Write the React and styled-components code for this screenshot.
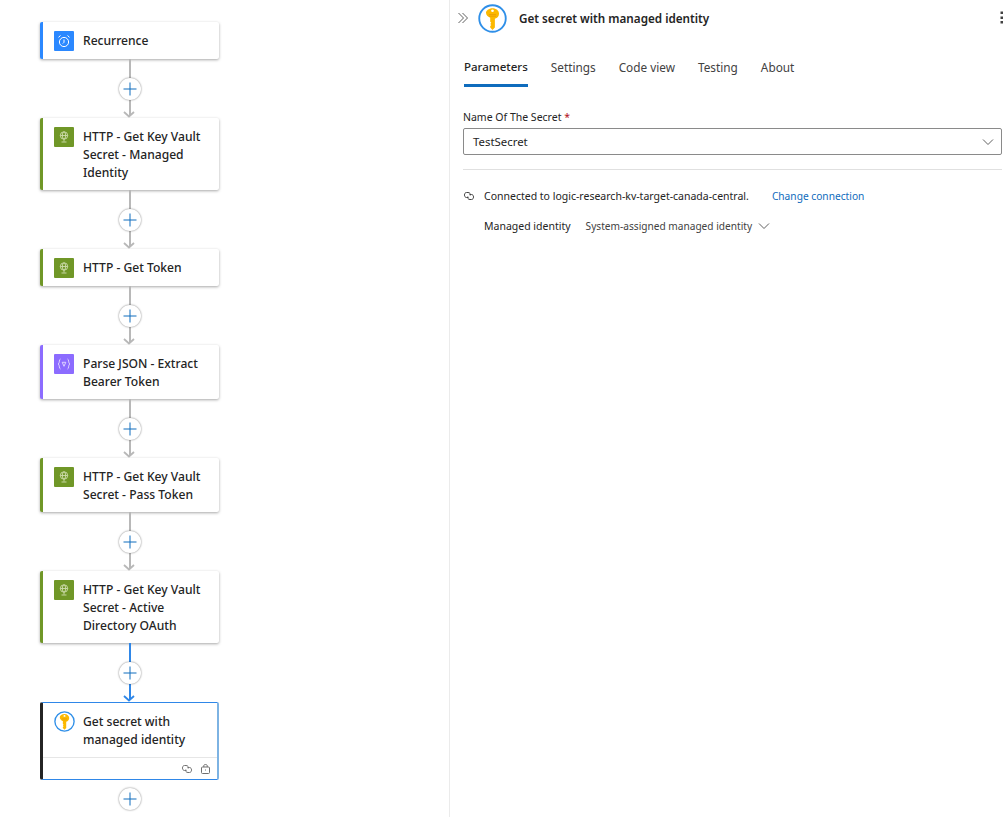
import React from 'react';
import styled, { createGlobalStyle } from 'styled-components';

const GlobalStyle = createGlobalStyle`
    html, body {
        margin: 0;
        padding: 0;
        background: #fff;
        overflow: hidden;
    }
    body {
        font-family: "Noto Sans", "Open Sans", sans-serif;
        color: #242424;
    }
`;

const Page = styled.div`
    display: flex;
    width: 1006px;
    height: 817px;
    overflow: hidden;
`;

const Canvas = styled.div`
    width: 450px;
    flex-shrink: 0;
    box-sizing: border-box;
    padding: 22px 0 0 40px;
    border-right: 1px solid #ebebeb;
    display: flex;
    flex-direction: column;
    align-items: flex-start;
`;

const Card = styled.div`
    width: 179px;
    box-sizing: border-box;
    min-height: 37px;
    background: #fff;
    border-left: 3px solid ${({ $color }) => $color};
    border-radius: 2px;
    box-shadow: 0 1px 3px rgba(0, 0, 0, 0.35);
`;

const SelectedCard = styled(Card)`
    border-top: 1px solid #2f87e8;
    border-bottom: 1px solid #2f87e8;
    border-right: 2px solid #7db3e3;
    box-shadow: none;
`;

const CardBody = styled.div`
    display: flex;
    gap: ${({ $selected }) => ($selected ? '8px' : '9px')};
    padding: 8px 6px 8px 11px;
`;

const IconTile = styled.div`
    width: 20px;
    height: 20px;
    flex-shrink: 0;
    margin-top: 1px;
    background: ${({ $color }) => $color};
    border-radius: 1px;
    display: flex;
    align-items: center;
    justify-content: center;
`;

const BadgeSlot = styled.div`
    flex-shrink: 0;
    display: flex;
    align-self: flex-start;
`;

const CardTitle = styled.div`
    padding-top: 2px;
    font-size: 12.1px;
    line-height: 18px;
    font-weight: 500;
    color: #242424;
`;

const CardFooter = styled.div`
    height: 22px;
    box-sizing: border-box;
    border-top: 1px solid #e6e6e6;
    display: flex;
    align-items: center;
    justify-content: flex-end;
    gap: 7px;
    padding-right: 6px;
`;

const Connector = styled.div`
    width: 180px;
    height: 59px;
    display: flex;
    flex-direction: column;
    align-items: center;
    position: relative;
`;

const Line = styled.div`
    width: 2px;
    height: 57px;
    margin-left: -1px;
    background: ${({ $active }) => ($active ? '#2f87e8' : '#b8b8b8')};
`;

const Arrow = styled.svg`
    position: absolute;
    left: 83px;
    bottom: 0;
`;

const AddButton = styled.div`
    position: absolute;
    left: 79px;
    top: ${({ $top }) => $top}px;
    width: 22px;
    height: 22px;
    box-sizing: border-box;
    border-radius: 50%;
    background: #fff;
    box-shadow: 0 0 2px rgba(0, 0, 0, 0.55);
    display: flex;
    align-items: center;
    justify-content: center;
`;

const TrailingAdd = styled.div`
    position: relative;
    width: 180px;
    height: 30px;
`;

const Panel = styled.div`
    flex: 1;
    min-width: 0;
    display: flex;
    flex-direction: column;
    padding-left: 13px;
    padding-right: 4px;
    position: relative;
`;

const PanelHeader = styled.div`
    height: 36px;
    display: flex;
    align-items: center;
`;

const Collapse = styled.svg`
    margin-right: 9px;
    margin-left: -6px;
`;

const PanelTitle = styled.div`
    margin-left: 12px;
    font-size: 11.7px;
    font-weight: 600;
`;

const Kebab = styled.svg`
    position: absolute;
    right: 2px;
    top: 11px;
`;

const Tabs = styled.div`
    display: flex;
    gap: 23px;
    height: 51px;
    margin-left: 1px;
`;

const Tab = styled.div`
    height: 51px;
    box-sizing: border-box;
    padding-top: 22px;
    font-size: ${({ $active }) => ($active ? '11.5px' : '11.8px')};
    line-height: 18px;
    font-weight: ${({ $active }) => ($active ? 500 : 400)};
    color: ${({ $active }) => ($active ? '#242424' : '#424242')};
    border-bottom: 3px solid ${({ $active }) => ($active ? '#0f6cbd' : 'transparent')};
`;

const FieldLabel = styled.div`
    margin-top: 22px;
    font-size: 10.5px;
    line-height: 16px;
    color: #242424;
`;

const Required = styled.span`
    color: #b10e1c;
`;

const Select = styled.div`
    height: 27px;
    margin-top: 3px;
    box-sizing: border-box;
    border: 1px solid #8a8a8a;
    border-radius: 2px;
    display: flex;
    align-items: center;
    justify-content: space-between;
    padding: 0 7px 0 9px;
    font-size: 11.4px;
`;

const Divider = styled.div`
    height: 1px;
    margin-top: 14px;
    background: #e0e0e0;
`;

const ConnectionRow = styled.div`
    display: flex;
    align-items: center;
    margin-top: 18px;
    height: 16px;
    font-size: 10.5px;
`;

const ConnectionText = styled.span`
    margin-left: 9px;
`;

const ChangeLink = styled.span`
    margin-left: 23px;
    font-size: 10.2px;
    color: #0f6cbd;
`;

const IdentityRow = styled.div`
    display: flex;
    align-items: center;
    margin-top: 14px;
    margin-left: 21px;
    height: 16px;
    font-size: 10.5px;
`;

const IdentityValue = styled.span`
    margin-left: 15px;
    font-size: 10.15px;
    color: #424242;
`;

const IdentityChevron = styled.svg`
    margin-left: 6px;
`;

const KeyBadge = ({ size }) => (
    <svg width={size} height={size} viewBox="0 0 28 28">
        <circle cx="14" cy="14" r="12.8" fill="#fff" stroke="#2f8fe8" strokeWidth="1.8" />
        <path
            d="M14 4c3.6 0 6.3 2.4 6.3 5.3 0 2.3-1.6 4.2-4 5v8.4L14 25l-2.2-2.2v-1.6l1-1-1-1 1-1-1-1v-3.9c-2.4-.8-4.1-2.7-4.1-5C7.7 6.4 10.400 4 14 4z"
            fill="#fcb900"
        />
        <circle cx="14" cy="6.500" r="1.300" fill="#fff" />
        <path d="M10.500 10.200h7M10.500 11.800h7" stroke="#e89c00" strokeWidth="0.8" />
    </svg>
);

const ClockIcon = () => (
    <svg width="14" height="14" viewBox="0 0 14 14" fill="none" stroke="#fff" strokeWidth="1">
        <circle cx="7" cy="8" r="4.600" />
        <path d="M7 5.500V8.300L5.800 9.500M1.500 3.300 3.500 1.500M12.500 3.300 10.500 1.500" />
    </svg>
);

const GlobeIcon = () => (
    <svg width="14" height="14" viewBox="0 0 14 14" fill="none" stroke="#cfdcae" strokeWidth="0.9">
        <circle cx="7" cy="5.500" r="3.700" />
        <ellipse cx="7" cy="5.500" rx="1.600" ry="3.700" />
        <path d="M3.300 5.500H10.700M7 9.200V11.500M4.500 12H9.500" />
    </svg>
);

const BracesIcon = () => (
    <svg width="14" height="14" viewBox="0 0 14 14" fill="none" stroke="#e6dcff" strokeWidth="0.9">
        <path d="M3.500 2C2 2 2.800 6 1.300 7 2.800 8 2 12 3.500 12M10.500 2C12 2 11.200 6 12.700 7 11.200 8 12 12 10.500 12" />
        <path d="M5.200 5.300 7 9.300 8.800 5.300Z" />
    </svg>
);

const LinkIcon = ({ color = '#707070' }) => (
    <svg width="12" height="12" viewBox="0 0 12 12" fill="none" stroke={color} strokeWidth="1">
        <path d="M5.500 7.500H3.500C.8 7.500.8 2.500 3.500 2.500H5C7 2.500 7.800 4.200 7.200 5.500" />
        <path d="M6.500 4.500H8.500C11.200 4.500 11.200 9.500 8.500 9.500H7C5 9.500 4.200 7.800 4.800 6.500" />
    </svg>
);

const LockIcon = () => (
    <svg width="11" height="12" viewBox="0 0 11 12" fill="none" stroke="#707070" strokeWidth="1">
        <rect x="1.500" y="4" width="8" height="6.500" rx="1" />
        <path d="M3.800 4V2.500C3.800 1.200 7.200 1.200 7.200 2.500V4M5.500 6.500V7.500" />
    </svg>
);

const Plus = () => (
    <svg width="14" height="14" viewBox="0 0 14 14" stroke="#0f6cbd" strokeWidth="1">
        <path d="M7 0.500V13.500M0.500 7H13.500" />
    </svg>
);

const Link = ({ active }) => (
    <Connector>
        <Line $active={active} />
        <Arrow width="12" height="8" viewBox="0 0 12 8" fill="none" stroke={active ? '#2f87e8' : '#b8b8b8'} strokeWidth="1.800">
            <path d="M1 2 6 6.500 11 2" />
        </Arrow>
        <AddButton $top={19}>
            <Plus />
        </AddButton>
    </Connector>
);

const steps = [
    { title: 'Recurrence', color: '#2b88ff', icon: <ClockIcon /> },
    { title: 'HTTP - Get Key Vault Secret - Managed Identity', color: '#709727', icon: <GlobeIcon /> },
    { title: 'HTTP - Get Token', color: '#709727', icon: <GlobeIcon /> },
    { title: 'Parse JSON - Extract Bearer Token', color: '#8c6cff', icon: <BracesIcon /> },
    { title: 'HTTP - Get Key Vault Secret - Pass Token', color: '#709727', icon: <GlobeIcon /> },
    { title: 'HTTP - Get Key Vault Secret - Active Directory OAuth', color: '#709727', icon: <GlobeIcon /> },
];

const App = () => (
    <Page>
        <GlobalStyle />
        <Canvas>
            {steps.map(({ title, color, icon }, index) => (
                <React.Fragment key={index}>
                    <Card $color={color}>
                        <CardBody>
                            <IconTile $color={color}>{icon}</IconTile>
                            <CardTitle>{title}</CardTitle>
                        </CardBody>
                    </Card>
                    <Link active={index === steps.length - 1} />
                </React.Fragment>
            ))}
            <SelectedCard $color="#242424">
                <CardBody $selected>
                    <BadgeSlot>
                        <KeyBadge size={21} />
                    </BadgeSlot>
                    <CardTitle>Get secret with managed identity</CardTitle>
                </CardBody>
                <CardFooter>
                    <LinkIcon />
                    <LockIcon />
                </CardFooter>
            </SelectedCard>
            <TrailingAdd>
                <AddButton $top={8}>
                    <Plus />
                </AddButton>
            </TrailingAdd>
        </Canvas>
        <Panel>
            <PanelHeader>
                <Collapse width="12" height="12" viewBox="0 0 12 12" fill="none" stroke="#616161" strokeWidth="1">
                    <path d="M1.500 1 6.500 6 1.500 11M5.500 1 10.500 6 5.500 11" />
                </Collapse>
                <KeyBadge size={29} />
                <PanelTitle>Get secret with managed identity</PanelTitle>
            </PanelHeader>
            <Kebab width="4" height="14" viewBox="0 0 4 14" fill="#424242">
                <rect x="0.500" y="0.500" width="2.500" height="2.500" />
                <rect x="0.500" y="5.500" width="2.500" height="2.500" />
                <rect x="0.500" y="10" width="2.500" height="2.500" />
            </Kebab>
            <Tabs>
                <Tab $active>Parameters</Tab>
                <Tab>Settings</Tab>
                <Tab>Code view</Tab>
                <Tab>Testing</Tab>
                <Tab>About</Tab>
            </Tabs>
            <FieldLabel>
                Name Of The Secret <Required>*</Required>
            </FieldLabel>
            <Select>
                TestSecret
                <svg width="12" height="8" viewBox="0 0 12 8" fill="none" stroke="#616161" strokeWidth="1">
                    <path d="M1 1.500 6 6.500 11 1.500" />
                </svg>
            </Select>
            <Divider />
            <ConnectionRow>
                <LinkIcon color="#424242" />
                <ConnectionText>Connected to logic-research-kv-target-canada-central.</ConnectionText>
                <ChangeLink>Change connection</ChangeLink>
            </ConnectionRow>
            <IdentityRow>
                Managed identity
                <IdentityValue>System-assigned managed identity</IdentityValue>
                <IdentityChevron width="12" height="8" viewBox="0 0 12 8" fill="none" stroke="#616161" strokeWidth="1">
                    <path d="M1 1.500 6 6.500 11 1.500" />
                </IdentityChevron>
            </IdentityRow>
        </Panel>
    </Page>
);

export default App;
